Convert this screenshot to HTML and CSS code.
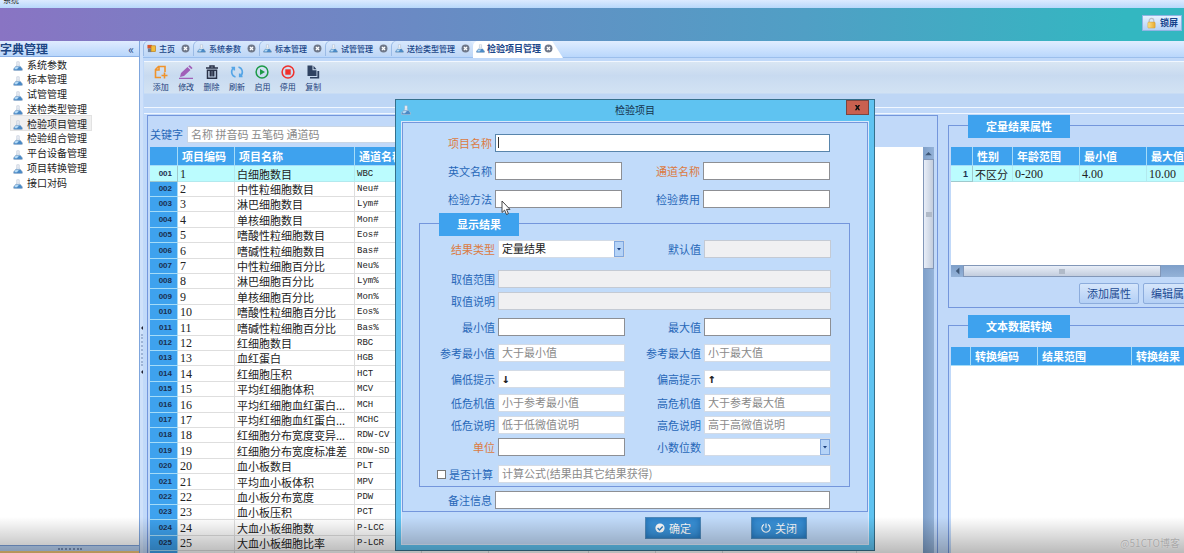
FILE: index.html
```html
<!DOCTYPE html>
<html lang="zh-CN">
<head>
<meta charset="utf-8">
<title>系统</title>
<link rel="stylesheet" href="styles.css">
</head>
<body>
<svg class="defs" aria-hidden="true">
  <defs>
    <linearGradient id="glass" x1="0" y1="0" x2="0" y2="1"><stop offset="0" stop-color="#fff"/><stop offset="1" stop-color="#b4c4d8"/></linearGradient>
    <linearGradient id="gold" x1="0" y1="0" x2="1" y2="0"><stop offset="0" stop-color="#fbe28a"/><stop offset="1" stop-color="#e9a92c"/></linearGradient>
  </defs>
  <symbol id="flask" viewBox="0 0 10 10">
    <path d="M3.800.8h2.400v3.400L9.500 7.800q.6 1.900-1.100 1.900H1.600Q-.1 9.700.5 7.800L3.800 4.200z" fill="url(#glass)" stroke="#a3b3c8" stroke-width=".5"/>
    <path d="M2.600 5.600h4.800L9.200 8q.3 1.300-.8 1.300H1.600Q.5 9.300.8 8z" fill="#4a8ac6"/>
    <path d="M2.400 6h3.400L4 8.200H1.400z" fill="#b5daf5"/>
  </symbol>
  <symbol id="close" viewBox="0 0 10 10">
    <circle cx="5" cy="5" r="4.400" fill="#6f7889"/>
    <path d="M3.300 3.300l3.400 3.400M6.700 3.300L3.300 6.700" stroke="#fff" stroke-width="1.500"/>
  </symbol>
  <symbol id="drop" viewBox="0 0 10 16">
    <rect x=".5" y=".5" width="9" height="15" fill="#b5d3f7" stroke="#7fa6de"/>
    <path d="M3 7h4L5 9.500z" fill="#1b3f7d"/>
  </symbol>
</svg>

<div class="app">
  <div class="titlebar"><span>系统</span></div>
  <header class="banner">
    <button class="lock" type="button">
      <svg class="icon-m" viewBox="0 0 12 12"><path d="M3.500 6V3.500a2.500 2.500 0 0 1 5 0V6" fill="none" stroke="#b9bec8" stroke-width="1.400"/><rect x="2" y="5" width="8" height="6.500" rx="1" fill="url(#gold)" stroke="#c79a3c" stroke-width=".5"/></svg>
      锁屏
    </button>
  </header>

  <div class="workspace">
    <aside class="sidebar">
      <div class="side-head"><h2>字典管理</h2><button type="button" aria-label="收起">«</button></div>
      <nav class="side-nav">
        <a href="#"><svg><use href="#flask"/></svg><span>系统参数</span></a>
        <a href="#"><svg><use href="#flask"/></svg><span>标本管理</span></a>
        <a href="#"><svg><use href="#flask"/></svg><span>试管管理</span></a>
        <a href="#"><svg><use href="#flask"/></svg><span>送检类型管理</span></a>
        <a href="#" class="current"><svg><use href="#flask"/></svg><span>检验项目管理</span></a>
        <a href="#"><svg><use href="#flask"/></svg><span>检验组合管理</span></a>
        <a href="#"><svg><use href="#flask"/></svg><span>平台设备管理</span></a>
        <a href="#"><svg><use href="#flask"/></svg><span>项目转换管理</span></a>
        <a href="#"><svg><use href="#flask"/></svg><span>接口对码</span></a>
      </nav>
      <div class="side-grip"><i></i></div>
      <div class="side-strip"></div>
    </aside>
    <div class="splitter"><b></b><i></i><b></b></div>

    <main class="main">
      <div class="tabs">
        <button type="button" class="tab"><svg viewBox="0 0 10 10"><rect x=".5" y="1" width="5" height="4" fill="#d9542b"/><rect x="1" y="5" width="4" height="4" fill="#6d7f99"/><rect x="4.500" y="2" width="5" height="6.500" fill="#f3bd3a" stroke="#b57b1c" stroke-width=".7"/></svg>主页<svg class="x"><use href="#close"/></svg></button>
        <button type="button" class="tab"><svg><use href="#flask"/></svg>系统参数<svg class="x"><use href="#close"/></svg></button>
        <button type="button" class="tab"><svg><use href="#flask"/></svg>标本管理<svg class="x"><use href="#close"/></svg></button>
        <button type="button" class="tab"><svg><use href="#flask"/></svg>试管管理<svg class="x"><use href="#close"/></svg></button>
        <button type="button" class="tab"><svg><use href="#flask"/></svg>送检类型管理<svg class="x"><use href="#close"/></svg></button>
        <button type="button" class="tab active"><svg><use href="#flask"/></svg>检验项目管理<svg class="x"><use href="#close"/></svg></button>
      </div>

      <div class="toolbar">
        <div class="tools">
          <button type="button"><svg viewBox="0 0 14 14" fill="none" stroke="#f0932b" stroke-width="1.600"><path d="M7 12.500H1.500v-8l3-3H11V7M1.500 5h3.500V1.500M7.500 10.500h6M10.500 7.500v6"/></svg>添加</button>
          <button type="button"><svg viewBox="0 0 14 14" fill="#a05fb8"><path d="M1 12l1-4 6.500-6 3 3L5 11zM9.300 1.300L10.800.2l2.800 2.800-1.300 1.200zM0 12.800h14V14H0z"/></svg>修改</button>
          <button type="button"><svg viewBox="0 0 14 14" fill="none" stroke="#2a3248" stroke-width="1.500"><path d="M1 3h12M5 2.500V1h4v1.500M2.500 4.500v8.700h9V4.500M2 5.200h10M5.300 6v5.500M7 6v5.500M8.700 6v5.500"/></svg>删除</button>
          <button type="button"><svg viewBox="0 0 14 14" fill="none" stroke="#55a5e6" stroke-width="1.600"><path d="M5.500 12A5.200 5.200 0 0 1 3.500 3M8.500 2a5.200 5.200 0 0 1 2 9M1.500 2.500h2.800v3M12.500 11.500H9.700v-3"/></svg>刷新</button>
          <button type="button"><svg viewBox="0 0 14 14"><circle cx="7" cy="7" r="5.900" fill="none" stroke="#1d9a48" stroke-width="1.500"/><path d="M5 4l5 3-5 3z" fill="#1d9a48"/></svg>启用</button>
          <button type="button"><svg viewBox="0 0 14 14"><circle cx="7" cy="7" r="5.900" fill="none" stroke="#f0302c" stroke-width="1.500"/><rect x="4.300" y="4.300" width="5.400" height="5.400" fill="#f0302c"/></svg>停用</button>
          <button type="button"><svg viewBox="0 0 14 14" fill="#2f4261"><path d="M1.500.5h5v4.800h4V11h-9zM7.500.8l3 3.500h-3zM11.400 6h1.800v7.500H4V12h7.400z"/></svg>复制</button>
        </div>
      </div>

      <div class="content">
        <section class="list">
          <div class="search"><label for="kw">关键字</label><input id="kw" type="text" placeholder="名称 拼音码 五笔码 通道码"></div>
          <div class="list-body">
            <div class="grid-wrap">
              <table class="grid items">
                <colgroup><col class="w28"><col class="w56"><col class="w120"><col class="w67"><col class="w67"><col class="w100"><col class="w67"><col class="w67"><col class="w134"></colgroup>
                <thead><tr><th></th><th>项目编码</th><th>项目名称</th><th>通道名称</th><th></th><th></th><th></th><th></th><th></th></tr></thead>
                <tbody>
                  <tr class="sel"><th>001</th><td>1</td><td>白细胞数目</td><td>WBC</td><td></td><td></td><td></td><td></td><td></td></tr>
                  <tr><th>002</th><td>2</td><td>中性粒细胞数目</td><td>Neu#</td><td></td><td></td><td></td><td></td><td></td></tr>
                  <tr><th>003</th><td>3</td><td>淋巴细胞数目</td><td>Lym#</td><td></td><td></td><td></td><td></td><td></td></tr>
                  <tr><th>004</th><td>4</td><td>单核细胞数目</td><td>Mon#</td><td></td><td></td><td></td><td></td><td></td></tr>
                  <tr><th>005</th><td>5</td><td>嗜酸性粒细胞数目</td><td>Eos#</td><td></td><td></td><td></td><td></td><td></td></tr>
                  <tr><th>006</th><td>6</td><td>嗜碱性粒细胞数目</td><td>Bas#</td><td></td><td></td><td></td><td></td><td></td></tr>
                  <tr><th>007</th><td>7</td><td>中性粒细胞百分比</td><td>Neu%</td><td></td><td></td><td></td><td></td><td></td></tr>
                  <tr><th>008</th><td>8</td><td>淋巴细胞百分比</td><td>Lym%</td><td></td><td></td><td></td><td></td><td></td></tr>
                  <tr><th>009</th><td>9</td><td>单核细胞百分比</td><td>Mon%</td><td></td><td></td><td></td><td></td><td></td></tr>
                  <tr><th>010</th><td>10</td><td>嗜酸性粒细胞百分比</td><td>Eos%</td><td></td><td></td><td></td><td></td><td></td></tr>
                  <tr><th>011</th><td>11</td><td>嗜碱性粒细胞百分比</td><td>Bas%</td><td></td><td></td><td></td><td></td><td></td></tr>
                  <tr><th>012</th><td>12</td><td>红细胞数目</td><td>RBC</td><td></td><td></td><td></td><td></td><td></td></tr>
                  <tr><th>013</th><td>13</td><td>血红蛋白</td><td>HGB</td><td></td><td></td><td></td><td></td><td></td></tr>
                  <tr><th>014</th><td>14</td><td>红细胞压积</td><td>HCT</td><td></td><td></td><td></td><td></td><td></td></tr>
                  <tr><th>015</th><td>15</td><td>平均红细胞体积</td><td>MCV</td><td></td><td></td><td></td><td></td><td></td></tr>
                  <tr><th>016</th><td>16</td><td>平均红细胞血红蛋白...</td><td>MCH</td><td></td><td></td><td></td><td></td><td></td></tr>
                  <tr><th>017</th><td>17</td><td>平均红细胞血红蛋白...</td><td>MCHC</td><td></td><td></td><td></td><td></td><td></td></tr>
                  <tr><th>018</th><td>18</td><td>红细胞分布宽度变异...</td><td>RDW-CV</td><td></td><td></td><td></td><td></td><td></td></tr>
                  <tr><th>019</th><td>19</td><td>红细胞分布宽度标准差</td><td>RDW-SD</td><td></td><td></td><td></td><td></td><td></td></tr>
                  <tr><th>020</th><td>20</td><td>血小板数目</td><td>PLT</td><td></td><td></td><td></td><td></td><td></td></tr>
                  <tr><th>021</th><td>21</td><td>平均血小板体积</td><td>MPV</td><td></td><td></td><td></td><td></td><td></td></tr>
                  <tr><th>022</th><td>22</td><td>血小板分布宽度</td><td>PDW</td><td></td><td></td><td></td><td></td><td></td></tr>
                  <tr><th>023</th><td>23</td><td>血小板压积</td><td>PCT</td><td></td><td></td><td></td><td></td><td></td></tr>
                  <tr><th>024</th><td>24</td><td>大血小板细胞数</td><td>P-LCC</td><td></td><td></td><td></td><td></td><td></td></tr>
                  <tr><th>025</th><td>25</td><td>大血小板细胞比率</td><td>P-LCR</td><td></td><td></td><td></td><td></td><td></td></tr>
                  <tr><th></th><td></td><td></td><td></td><td></td><td></td><td></td><td></td><td></td></tr>
                </tbody>
              </table>
            </div>
            <div class="vscroll"><svg viewBox="0 0 10 10"><path d="M2 7h6L5 4z" fill="#3f5878"/></svg><div class="thumb"><i></i></div></div>
          </div>
        </section>

        <div class="side-panels">
          <section class="group">
            <h3 class="tag">定量结果属性</h3>
            <div class="grid-wrap short">
              <table class="grid attrs">
                <colgroup><col class="w22"><col class="w40"><col class="w67"><col class="w67"><col class="w67"></colgroup>
                <thead><tr><th></th><th>性别</th><th>年龄范围</th><th>最小值</th><th>最大值</th></tr></thead>
                <tbody><tr class="sel"><th>1</th><td>不区分</td><td>0-200</td><td>4.00</td><td>10.00</td></tr></tbody>
              </table>
            </div>
            <div class="hscroll"><svg viewBox="0 0 10 10"><path d="M7 2v6L4 5z" fill="#3f5878"/></svg><div class="thumb"><i></i></div></div>
            <div class="actions"><button type="button">添加属性</button><button type="button">编辑属性</button></div>
          </section>
          <section class="group fill">
            <h3 class="tag">文本数据转换</h3>
            <div class="grid-wrap">
              <table class="grid conv">
                <colgroup><col class="w20"><col class="w67"><col class="w94"><col class="w94"></colgroup>
                <thead><tr><th></th><th>转换编码</th><th>结果范围</th><th>转换结果</th></tr></thead>
              </table>
            </div>
          </section>
        </div>
      </div>
    </main>
  </div>

  <form class="dialog" role="dialog" aria-labelledby="dlg-title">
    <div class="dlg-head">
      <svg><use href="#flask"/></svg>
      <h1 id="dlg-title">检验项目</h1>
      <button type="button" class="dlg-x" aria-label="关闭窗口"><svg viewBox="0 0 8 8"><path d="M1 1h2l1 1.700L5 1h2L5.200 4 7 7H5L4 5.300 3 7H1l1.800-3z" fill="#111"/></svg></button>
    </div>
    <div class="dlg-body">
      <div class="pane">
        <div class="fields outer">
          <label class="req" for="f1">项目名称</label><input class="wide caret" id="f1" type="text">
          <label for="f2">英文名称</label><input id="f2" type="text"><label class="req" for="f3">通道名称</label><input id="f3" type="text">
          <label for="f4">检验方法</label><input id="f4" type="text"><label for="f5">检验费用</label><input id="f5" type="text">
        </div>
        <section class="group result">
          <h3 class="tag">显示结果</h3>
          <div class="fields inner">
            <label class="req" for="g1">结果类型</label><span class="pick"><select id="g1"><option>定量结果</option></select><svg><use href="#drop"/></svg></span>
            <label for="g2">默认值</label><input class="off" id="g2" type="text" disabled>
            <label for="g3">取值范围</label><input class="off soft wide" id="g3" type="text" disabled>
            <label for="g4">取值说明</label><input class="off soft wide" id="g4" type="text" disabled>
            <label for="g5">最小值</label><input id="g5" type="text"><label for="g6">最大值</label><input id="g6" type="text">
            <label for="g7">参考最小值</label><input class="soft" id="g7" type="text" placeholder="大于最小值"><label for="g8">参考最大值</label><input class="soft" id="g8" type="text" placeholder="小于最大值">
            <label for="g9">偏低提示</label><input class="soft arrow" id="g9" type="text" value="↓"><label for="g10">偏高提示</label><input class="soft arrow" id="g10" type="text" value="↑">
            <label for="g11">低危机值</label><input class="soft" id="g11" type="text" placeholder="小于参考最小值"><label for="g12">高危机值</label><input class="soft" id="g12" type="text" placeholder="大于参考最大值">
            <label for="g13">低危说明</label><input class="soft" id="g13" type="text" placeholder="低于低微值说明"><label for="g14">高危说明</label><input class="soft" id="g14" type="text" placeholder="高于高微值说明">
            <label class="req" for="g15">单位</label><input id="g15" type="text">
            <label for="g16">小数位数</label><span class="pick"><select id="g16"><option></option></select><svg><use href="#drop"/></svg></span>
            <label class="check"><input type="checkbox">是否计算</label><input class="soft wide" type="text" aria-label="计算公式" placeholder="计算公式(结果由其它结果获得)">
          </div>
        </section>
        <div class="fields memo"><label for="m1">备注信息</label><input class="wide" id="m1" type="text"></div>
      </div>
      <div class="dlg-foot">
        <button type="submit"><svg viewBox="0 0 10 10"><circle cx="5" cy="5" r="4.600" fill="#fff"/><path d="M2.600 5l1.900 1.900 3.200-3.300" fill="none" stroke="#2b80c8" stroke-width="1.400"/></svg>确定</button>
        <button type="button"><svg viewBox="0 0 10 10" fill="none" stroke="#fff" stroke-width="1.100"><path d="M3 1.500a4.100 4.100 0 1 0 4 0M5 .5v4.500"/></svg>关闭</button>
      </div>
    </div>
  </form>

  <svg class="cursor" viewBox="0 0 10 16"><path d="M1 1v11.500l2.600-2.400 1.900 4.400 1.900-.9-1.900-4.200H9z" fill="#fff" stroke="#333" stroke-width=".9"/></svg>
  <div class="shade"></div>
  <div class="mark">@51CTO博客</div>
</div>
</body>
</html>
```
FILE: styles.css
```css
* { box-sizing: border-box; }

body {
  margin: 0;
  font: 11px/15px "Noto Sans CJK SC", sans-serif;
  color: #222;
}

button, input, select { font: inherit; color: inherit; margin: 0; padding: 0; }
h1, h2, h3 { margin: 0; font-size: inherit; }
button { border: 0; background: none; white-space: nowrap; }
svg { flex: none; }
.defs { position: absolute; width: 0; height: 0; }

.app {
  position: relative;
  display: flex;
  flex-direction: column;
  height: 100vh;
  overflow: hidden;
  background: #c1d9f9;
}

/* Top */
.titlebar {
  display: flex;
  align-items: flex-end;
  height: 8px;
  padding: 0 3px 2px;
  overflow: hidden;
  font-size: 8px;
  line-height: 12px;
  background: linear-gradient(#dceaff, #b8d8fb);
}
.banner {
  display: flex;
  align-items: center;
  justify-content: flex-end;
  height: 33px;
  padding: 0 2px 4px 0;
  background: linear-gradient(90deg, #8974c3, #6a8ac4 35%, #509fc5 68%, #33b7c1 95%);
}
.lock {
  display: flex;
  align-items: center;
  gap: 3px;
  height: 16px;
  padding: 0 3px;
  border: 1px solid #8fb4e4;
  font-size: 9px;
  font-weight: bold;
  color: #15428b;
  background: linear-gradient(#e6f1ff, #b4d2f8);
}
.icon-m { width: 11px; height: 12px; }

.workspace { flex: 1; display: flex; min-height: 0; }

/* Sidebar */
.sidebar { flex: none; display: flex; flex-direction: column; width: 139px; background: #fff; }
.side-head {
  display: flex;
  align-items: center;
  justify-content: space-between;
  height: 16px;
  padding-right: 5px;
  border-bottom: 1px solid #8db3e8;
  background: linear-gradient(#dfecff, #b9d6fb);
  font-size: 12px;
  color: #1d4684;
}
.side-head h2 { line-height: 14px; }
.side-head button { line-height: 12px; }
.side-nav { display: grid; height: 133px; flex: none; justify-items: start; align-items: start; }
.side-nav a {
  display: flex;
  align-items: center;
  gap: 4px;
  margin-left: 11px;
  padding: 0 4px 0 2px;
  font-size: 10px;
  line-height: 13px;
  color: #222;
  text-decoration: none;
}
.side-nav svg { width: 10px; height: 10px; margin-top: 4px; }
.side-nav .current { background: #f0f0f0; box-shadow: 0 0 0 1px #e2e2e2; }
.side-grip {
  display: flex;
  justify-content: center;
  align-items: center;
  height: 6px;
  margin-top: auto;
  border-top: 1px solid #7ba0d8;
  background: #b9d3f5;
}
.side-grip i { width: 24px; border-top: 2px dotted #7890b8; }
.side-strip { height: 2px; background: #f7ca7c; }

.splitter {
  flex: none;
  display: flex;
  flex-direction: column;
  align-items: center;
  justify-content: center;
  gap: 4px;
  width: 4px;
  padding-top: 106px;
  border-left: 1px solid #7fa6dd;
  background: #cfe1fa;
}
.splitter i { height: 32px; border-left: 2px dotted #9eb4d6; }
.splitter b { border: 2px solid transparent; border-left: 0; border-right-color: #223; }

/* Tabs and toolbar */
.main { flex: 1; display: flex; flex-direction: column; min-width: 0; }
.tabs {
  display: flex;
  height: 17px;
  flex: none;
  border-bottom: 1px solid #9cbfec;
  background: linear-gradient(#e0edff, #b9d7fc);
}
.tab {
  display: flex;
  align-items: center;
  gap: 3px;
  height: 15px;
  padding: 0 3px 0 4px;
  border-radius: 5px 5px 0 0;
  font-size: 8px;
  font-weight: 500;
  color: #1a4688;
  box-shadow: inset 1px 0 #9bbbe6;
  background: linear-gradient(#d8e8fd, #bfd7f6);
}
.tab svg { width: 9px; height: 9px; }
.tab .x { margin-left: 3px; }
.tab.active {
  height: 17px;
  padding: 0 10px 2px 3px;
  gap: 2px;
  font-size: 9px;
  font-weight: bold;
  background: #fff;
  box-shadow: none;
  clip-path: polygon(0 0, 88% 0, 100% 100%, 0 100%);
}
.tab.active .x { margin-left: 1px; }
.toolbar {
  flex: none;
  margin: 3px 0 5px 1px;
  padding: 3px 0 14px 2px;
  border: solid #f1f7ff;
  border-width: 1px 0;
  background: linear-gradient(#d9e6f3, #c8daf0 30%, #d2e2f3 68%, #bed6f5 72%, #bed6f5);
}
.tools {
  display: grid;
  grid-template-columns: repeat(7, 1fr);
  width: 178px;
  margin-left: 2px;
}
.tools button {
  display: flex;
  flex-direction: column;
  align-items: center;
  gap: 2px;
  font-size: 8px;
  line-height: 12px;
  color: #1c3f7c;
}
.tools svg { width: 14px; height: 14px; }

/* Content */
.content {
  flex: 1;
  display: flex;
  gap: 10px;
  min-height: 0;
  margin-left: 1px;
  padding: 1px 0 0 3px;
  border-top: 1px solid #f1f7ff;
}
.list {
  flex: 1;
  display: flex;
  flex-direction: column;
  min-width: 0;
  padding: 0 3px 0 2px;
  border: solid #7496dc;
  border-width: 1px 1px 0;
}
.search { display: flex; align-items: center; gap: 4px; height: 31px; padding-top: 5px; flex: none; color: #2767b8; }
.search input { width: 260px; height: 17px; padding: 0 3px; border: 1px solid #c9d6e6; background: #fff; }
::placeholder { color: #8a8a8a; opacity: 1; }
.list-body { flex: 1; display: flex; min-height: 0; }
.grid-wrap { flex: 1; overflow: hidden; background: #fff; min-width: 0; }

.grid { border-collapse: separate; border-spacing: 0; table-layout: fixed; width: 0; }
.grid th, .grid td { padding: 0 0 0 2px; white-space: nowrap; overflow: hidden; line-height: 14px; text-align: left; }
.grid thead th {
  height: 19px;
  padding-left: 4px;
  border-right: 1px solid #a5dcf8;
  border-bottom: 1px solid #a5dcf8;
  background: #3ea2ee;
  color: #fff;
}
.grid tbody tr { height: 15px; }
.grid tbody tr:nth-child(5n+1), .grid tbody tr:nth-child(5n+4) { height: 16px; }
.grid td { border-right: 1px solid #dedede; border-bottom: 1px solid #dedede; }
.grid tbody th {
  padding: 0 5px 0 0;
  border-right: 1px solid #a5dcf8;
  border-bottom: 1px solid #a5dcf8;
  background: #3ea2ee;
  color: #1b2f50;
  font: bold 8px/14px "Liberation Sans", sans-serif;
  text-align: right;
}
.grid .sel td { background: #bbfcfe; border-color: #b3e9ee; }
.grid .sel th { background: #bbfcfe; border-color: #9fc9cd; }
.items td:nth-child(4) { font-family: "Liberation Mono", monospace; font-size: 9px; }
.items td:nth-child(2), .attrs td:nth-child(n+3) { font-family: "Liberation Serif", serif; font-size: 12px; }
.attrs tbody th { font-size: 9px; padding-right: 4px; }
.w20 { width: 20px; } .w22 { width: 22px; } .w28 { width: 28px; } .w40 { width: 40px; }
.w56 { width: 57px; } .w67 { width: 67px; } .w94 { width: 94px; } .w100 { width: 100px; }
.w120 { width: 120px; } .w134 { width: 134px; }

.vscroll { flex: none; width: 11px; background: linear-gradient(90deg, #7e9fc9, #94b2d8); }
.vscroll svg { display: block; width: 11px; height: 12px; }
.thumb {
  display: flex;
  align-items: center;
  justify-content: center;
  border: 1px solid #8297b8;
  background: linear-gradient(90deg, #e8eef8, #c3cddd);
}
.thumb i { width: 6px; height: 5px; background: #b0bac8; }
.vscroll .thumb { height: 110px; }
.hscroll { display: flex; height: 12px; background: linear-gradient(#7e9fc9, #94b2d8); }
.hscroll svg { width: 12px; height: 12px; }
.hscroll .thumb { width: 198px; background: linear-gradient(#e8eef8, #c3cddd); }

.side-panels { flex: none; display: flex; flex-direction: column; gap: 17px; width: 236px; padding-top: 10px; }
.group { display: flex; flex-direction: column; border: 1px solid #7496dc; border-right: 0; padding-left: 2px; }
.group.fill { flex: 1; border-bottom: 0; }
.tag {
  align-self: flex-start;
  height: 23px;
  margin: -11px 0 9px 17px;
  padding: 0 18px;
  background: #3ea2ee;
  color: #fff;
  line-height: 22px;
}
.short { flex: none; height: 118px; }
.actions { display: flex; gap: 4px; padding: 6px 0 3px 128px; overflow: hidden; }
.actions button {
  height: 21px;
  padding: 0 7px;
  border: 1px solid #8cacdc;
  border-radius: 2px;
  color: #1d4b93;
  background: linear-gradient(#d6e6fb, #b3cff5);
}

/* Dialog window */
.dialog {
  position: absolute;
  left: 395px;
  top: 99px;
  width: 480px;
  padding: 0 5px 5px;
  border: 1px solid #35708c;
  background: #5fc3f1;
}
.dlg-head { display: grid; grid-template-columns: 26px 1fr 26px; height: 21px; }
.dlg-head svg { width: 10px; height: 10px; margin-top: 5px; }
.dlg-head h1 { font-size: 10px; font-weight: normal; line-height: 20px; text-align: center; color: #15324c; }
.dlg-x { display: flex; align-items: center; justify-content: center; justify-self: end; width: 23px; height: 15px; border: 1px solid #7b4540; background: #c9604f; }
.dlg-head .dlg-x svg { width: 7px; height: 7px; margin: 0; }
.dlg-body { background: #c1dbfa; border: 1px solid #d9e9fc; }
.pane { border: 1px solid #7496dc; padding: 11px 17px 2px 16px; }
.fields {
  display: grid;
  grid-template-columns: 76px 127px 1fr 127px;
  align-items: center;
  color: #2767b8;
}
.fields label { text-align: right; padding-right: 3px; line-height: 18px; white-space: nowrap; }
.fields .req { color: #dc7a3f; }
.fields input[type="text"], .fields select {
  width: 100%;
  height: 18px;
  padding: 0 3px 2px;
  border: 1px solid #8d8f94;
  border-radius: 0;
  background: #fff;
  color: #222;
}
.fields input.wide { grid-column: 2 / -1; }
.fields input.soft, .fields select { border-color: #d3dbe6; }
.fields input.off { background: #f0f0f2; border-color: #c4cad4; }
.fields input.arrow { font-family: "DejaVu Sans Mono", monospace; font-size: 13px; font-weight: bold; }
.fields input.caret { border-color: #5885ac; background: linear-gradient(#333, #333) 2px 2px / 1px 11px no-repeat #fff; }
.outer { row-gap: 10px; margin-right: 20px; }
.pick { position: relative; display: block; }
.pick select { appearance: none; display: block; }
.pick svg { position: absolute; right: 1px; top: 1px; width: 10px; height: 16px; pointer-events: none; }
.result { margin: 15px 0 4px; padding: 0 18px 3px 2px; border-right: 1px solid #7496dc; }
.result .tag { margin-bottom: 4px; }
.inner { grid-template-rows: 18px 30px 22px 26px 26px 26px 24px 22px 22px 27px; align-items: end; }
.check { display: flex; align-items: center; justify-content: flex-end; gap: 3px; }
.fields .check { padding-right: 5px; }
.check input {
  appearance: none;
  width: 9px;
  height: 9px;
  border: 1px solid #777;
  background: #fff;
}
.memo { margin-right: 20px; }
.dlg-foot { display: flex; justify-content: flex-end; gap: 50px; padding: 5px 61px 5px; }
.dlg-foot button {
  display: flex;
  align-items: center;
  justify-content: center;
  gap: 4px;
  width: 56px;
  height: 22px;
  border: 1px solid #4e88b8;
  color: #fff;
  background: #3a92d8;
  box-shadow: inset 0 0 6px #1f6aae;
}
.dlg-foot svg { width: 10px; height: 10px; }

.cursor { position: absolute; left: 501px; top: 200px; width: 10px; height: 16px; }
.shade {
  position: absolute;
  inset: auto 0 0;
  height: 36px;
  background: linear-gradient(transparent, rgba(0, 0, 0, .27));
  pointer-events: none;
}
.mark { position: absolute; right: 4px; bottom: 3px; font-size: 10px; color: #a6a6a6; text-shadow: 0 0 1px #eee; }
```
